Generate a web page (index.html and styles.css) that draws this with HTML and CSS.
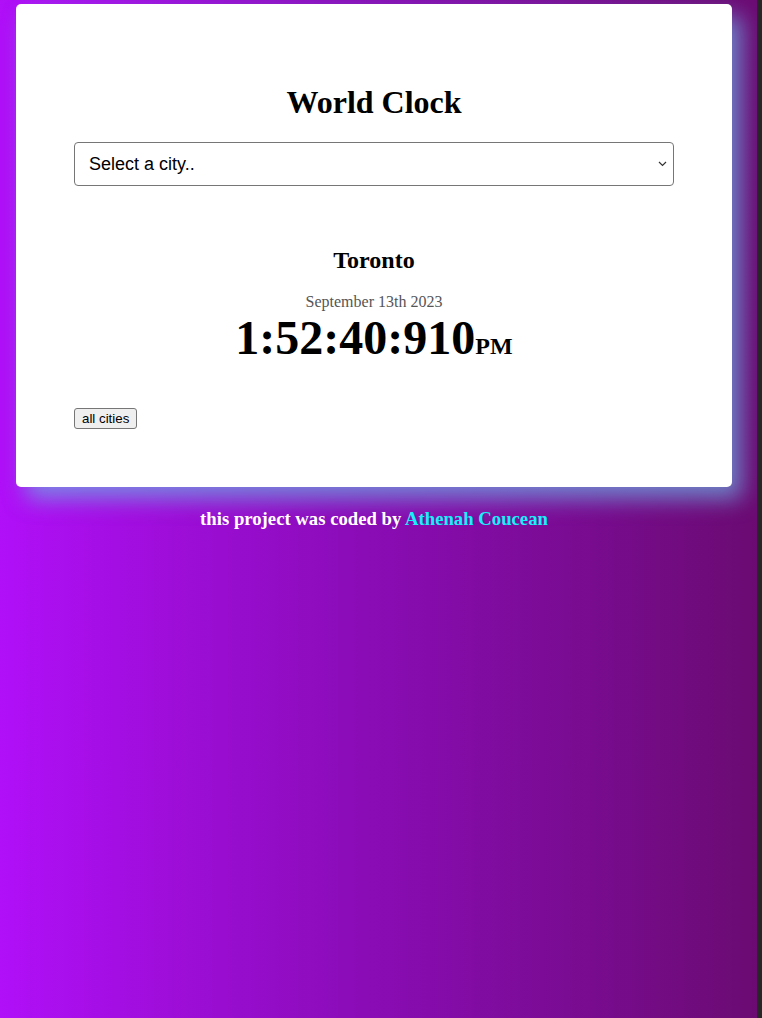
FILE: index.html
```html
<!DOCTYPE html>
<html lang="en">
<head>
<meta charset="utf-8">
<title>World Clock</title>
<link rel="stylesheet" href="styles.css">
</head>
<body>
<div class="page">
  <main class="card">
    <h1 class="title">World Clock</h1>
    <select class="city-select">
      <option>Select a city..</option>
    </select>
    <section class="cities">
      <div class="city">
        <h2 class="city-name">Toronto</h2>
        <div class="date">September 13th 2023</div>
        <div class="time">1:52:40:910<small class="ampm">PM</small></div>
      </div>
    </section>
    <button class="all-btn" type="button">all cities</button>
  </main>
  <footer class="footer">this project was coded by <a class="author" href="#">Athenah Coucean</a></footer>
</div>
</body>
</html>
```

FILE: styles.css
```css
html {
  background: #272727;
}
body {
  margin: 0;
  width: 757px;
  min-height: 1018px;
  background: linear-gradient(to right, #b00ff8 0%, #8c0cba 45%, #6b0b72 100%);
  font-family: "Liberation Serif", "Times New Roman", serif;
}
.page {
  padding-top: 4px;
  padding-left: 16px;
  width: 716px;
}
.card {
  background: #fff;
  border-radius: 5px;
  padding: 58px 58px 58px;
  box-shadow: 10px 12px 22px rgba(110, 170, 225, 0.75);
}
.title {
  font-size: 32px;
  font-weight: bold;
  text-align: center;
  margin: 22px 0 21px;
  line-height: 37px;
}
.city-select {
  display: block;
  width: 600px;
  height: 44px;
  margin: 0;
  border: 1px solid #767676;
  border-radius: 4px;
  background: #fff url("data:image/svg+xml;utf8,<svg xmlns='http://www.w3.org/2000/svg' width='9' height='6' viewBox='0 0 9 6'><path d='M1 1l3.5 3.5L8 1' fill='none' stroke='%23333' stroke-width='1.2'/></svg>") no-repeat right 6px center;
  appearance: none;
  -webkit-appearance: none;
  font-family: "Liberation Sans", Arial, sans-serif;
  font-size: 18px;
  color: #000;
  padding: 0 14px;
}
.cities {
  padding-top: 40px;
}
.city {
  text-align: center;
}
.city-name {
  font-size: 24px;
  font-weight: bold;
  margin: 20px 0 19px;
  line-height: 28px;
}
.date {
  font-size: 16px;
  color: #555;
  line-height: 18px;
}
.time {
  font-size: 48px;
  font-weight: bold;
  line-height: 53px;
}
.ampm {
  font-size: 24px;
}
.all-btn {
  display: block;
  margin-top: 35px;
  font-family: "Liberation Sans", Arial, sans-serif;
  font-size: 13.3px;
  background: #efefef;
  border: 1px solid #767676;
  border-radius: 3px;
  padding: 1px 7px;
  color: #000;
  height: 21px;
}
.footer {
  text-align: center;
  color: #fff;
  font-weight: bold;
  font-size: 18.72px;
  margin-top: 21px;
  line-height: 21px;
}
.author {
  color: #16f0f8;
  text-decoration: none;
}
```
